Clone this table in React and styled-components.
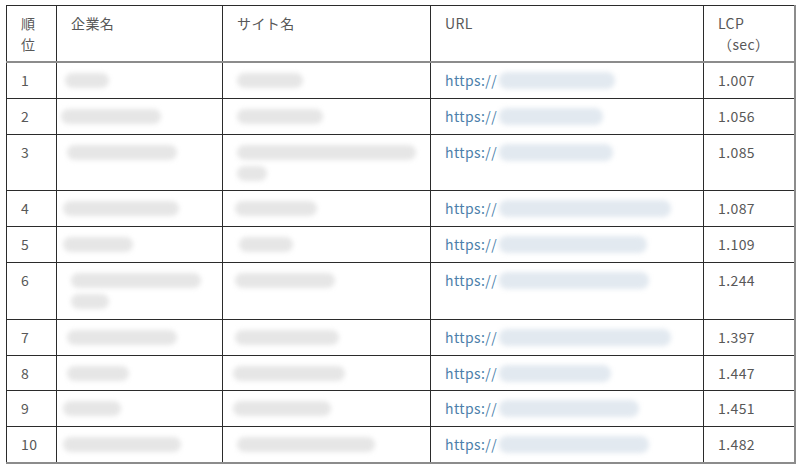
import React from 'react'
import styled, { createGlobalStyle } from 'styled-components'

const GlobalStyle = createGlobalStyle`
    html, body {
        margin: 0;
        padding: 0;
        background: #fff;
    }
    body {
        font-family: "Noto Sans CJK JP", "Noto Sans", sans-serif;
    }
`

const Page = styled.div`
    padding: 5px 0 0 6px;
`

const Table = styled.table`
    border-collapse: collapse;
    table-layout: fixed;
    width: 788px;
    font-size: 14px;
    line-height: 21px;
    letter-spacing: 0.4px;
    color: #585858;
`

const Cell = styled.td`
    border: 1px solid #2b2b2b;
    padding: 7px 14px 6.8px;
    vertical-align: top;
    text-align: left;
    font-weight: 400;
    &:last-child {
        border-right: 2px solid #8c8c8c;
    }
    tr:last-child > & {
        border-bottom: 2px solid #8c8c8c;
    }
`

const HeadCell = styled(Cell).attrs({ as: 'th' })`
    padding-top: 7px;
    padding-bottom: 6px;
`

const Line = styled.div`
    display: flex;
    align-items: center;
    height: 21px;
`

const Blob = styled.span`
    display: inline-block;
    height: ${(p) => (p.$url ? 17 : 15)}px;
    border-radius: 8px;
    background: ${(p) => (p.$url ? '#e2e9f0' : '#e6e6e6')};
    filter: blur(2.5px);
`

const Link = styled.span`
    color: #4d7fab;
    white-space: nowrap;
    display: flex;
    align-items: center;
    height: 21px;
`

const rows = [
    { company: [[4, 44]], site: [[10, 66]], url: 116, lcp: '1.007' },
    { company: [[0, 100]], site: [[10, 86]], url: 104, lcp: '1.056' },
    { company: [[6, 110]], site: [[10, 188], [10, 30]], url: 114, lcp: '1.085' },
    { company: [[2, 116]], site: [[8, 82]], url: 172, lcp: '1.087' },
    { company: [[2, 70]], site: [[12, 54]], url: 148, lcp: '1.109' },
    { company: [[10, 130], [10, 38]], site: [[8, 100]], url: 150, lcp: '1.244' },
    { company: [[6, 110]], site: [[8, 104]], url: 172, lcp: '1.397' },
    { company: [[6, 62]], site: [[6, 112]], url: 112, lcp: '1.447' },
    { company: [[2, 58]], site: [[6, 98]], url: 140, lcp: '1.451' },
    { company: [[2, 118]], site: [[10, 138]], url: 150, lcp: '1.482' },
]

const Blurred = ({ lines }) => (
    <>
        {lines.map(([offset, width], i) => (
            <Line key={i}>
                <Blob style={{ marginLeft: offset - 10, width }} />
            </Line>
        ))}
    </>
)

const App = () => {
    return (
        <Page>
            <GlobalStyle />
            <Table>
                <colgroup>
                    <col style={{ width: 50 }} />
                    <col style={{ width: 166 }} />
                    <col style={{ width: 208 }} />
                    <col style={{ width: 273 }} />
                    <col style={{ width: 91 }} />
                </colgroup>
                <thead>
                    <tr>
                        <HeadCell>順位</HeadCell>
                        <HeadCell>企業名</HeadCell>
                        <HeadCell>サイト名</HeadCell>
                        <HeadCell>URL</HeadCell>
                        <HeadCell>LCP（sec）</HeadCell>
                    </tr>
                </thead>
                <tbody>
                    {rows.map((row, i) => (
                        <tr key={i}>
                            <Cell>{i + 1}</Cell>
                            <Cell><Blurred lines={row.company} /></Cell>
                            <Cell><Blurred lines={row.site} /></Cell>
                            <Cell>
                                <Link>
                                    https://
                                    <Blob $url style={{ width: row.url, marginLeft: 2 }} />
                                </Link>
                            </Cell>
                            <Cell>{row.lcp}</Cell>
                        </tr>
                    ))}
                </tbody>
            </Table>
        </Page>
    )
}

export default App
